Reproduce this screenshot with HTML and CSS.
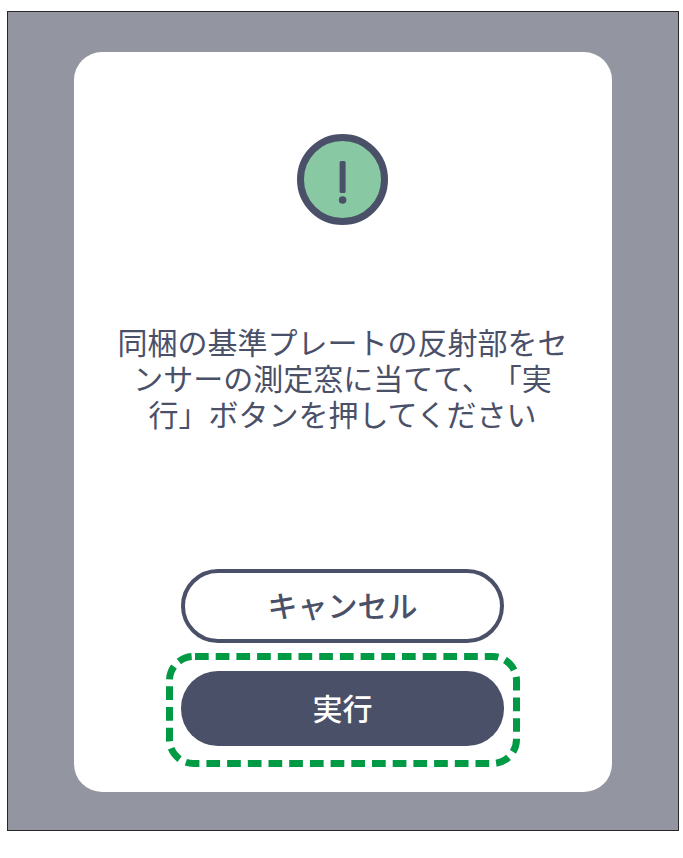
FILE: index.html
```html
<!DOCTYPE html>
<html lang="ja">
<head>
<meta charset="utf-8">
<title>基準プレート</title>
<link rel="stylesheet" href="styles.css">
</head>
<body>
<div class="frame">
  <div class="card">
    <svg class="alert-icon" width="92" height="92" viewBox="0 0 92 92" aria-hidden="true">
      <circle cx="45.5" cy="45.5" r="42" fill="#88c9a3" stroke="#4b5069" stroke-width="7"/>
      <rect x="42.6" y="27" width="6" height="32" rx="1.5" fill="#4b5069"/>
      <circle cx="45.6" cy="66" r="3.8" fill="#4b5069"/>
    </svg>
    <p class="message">同梱の基準プレートの反射部をセンサーの測定窓に当てて、「実行」ボタンを押してください</p>
    <div class="actions">
      <button class="btn btn-outline" type="button">キャンセル</button>
      <div class="highlight-wrap">
        <button class="btn btn-solid" type="button">実行</button>
        <svg class="highlight" width="354" height="114" viewBox="0 0 354 114" aria-hidden="true">
          <rect x="3.5" y="3.5" width="347" height="107" rx="24" fill="none" stroke="#009944" stroke-width="7" stroke-dasharray="13.7 7" stroke-dashoffset="-1.5"/>
        </svg>
      </div>
    </div>
  </div>
</div>
</body>
</html>
```
FILE: styles.css
```css
html, body {
  margin: 0;
  padding: 0;
  background: #fff;
}
body {
  width: 683px;
  height: 858px;
  overflow: hidden;
  font-family: "Noto Sans CJK JP", "Noto Sans", sans-serif;
}
.frame {
  box-sizing: border-box;
  width: 672px;
  height: 820px;
  margin: 11px 0 0 7px;
  padding: 40px 66px 0;
  background: #9395a0;
  border: 1px solid #2a2526;
}
.card {
  box-sizing: border-box;
  width: 538px;
  height: 740px;
  padding: 82px 1px 0 0;
  background: #fff;
  border-radius: 28px;
  display: flex;
  flex-direction: column;
  align-items: center;
}
.alert-icon {
  display: block;
  flex: none;
}
.message {
  width: 451px;
  margin: 97px 0 0;
  color: #4b5069;
  font-size: 30px;
  line-height: 36px;
  text-align: center;
  text-spacing-trim: space-all;
}
.actions {
  margin-top: 138px;
  display: flex;
  flex-direction: column;
  align-items: center;
  gap: 28px;
}
.btn {
  display: block;
  box-sizing: border-box;
  width: 323px;
  height: 74px;
  border-radius: 37px;
  font-family: inherit;
  font-size: 30px;
  font-weight: 500;
  padding: 0 0 4px;
}
.btn-outline {
  background: #fff;
  color: #4b5069;
  border: 4px solid #4b5069;
}
.btn-solid {
  height: 75px;
  background: #4b5069;
  color: #fff;
  border: 0;
}
.highlight-wrap {
  position: relative;
}
.highlight {
  position: absolute;
  left: -15px;
  top: -18px;
}
```
